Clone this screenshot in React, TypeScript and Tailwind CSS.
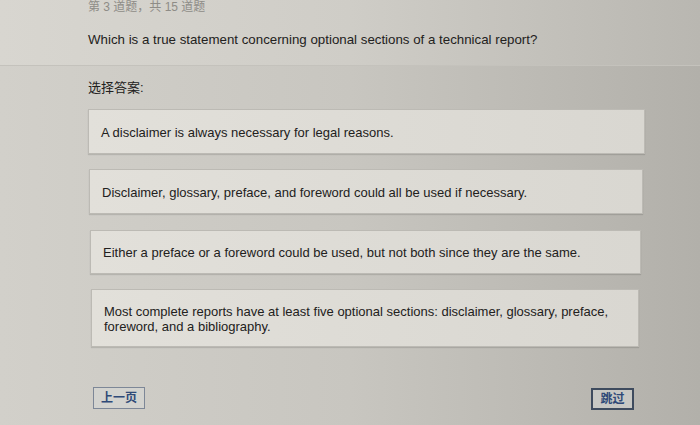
import React from 'react';

const options = [
  {
    id: 'a',
    text: 'A disclaimer is always necessary for legal reasons.',
    box: 'ml-[88px] w-[557px] h-[45px] mt-[12px]',
  },
  {
    id: 'b',
    text: 'Disclaimer, glossary, preface, and foreword could all be used if necessary.',
    box: 'ml-[89px] w-[554px] h-[45px] mt-[15px]',
  },
  {
    id: 'c',
    text: 'Either a preface or a foreword could be used, but not both since they are the same.',
    box: 'ml-[90px] w-[551px] h-[44px] mt-[16px]',
  },
  {
    id: 'd',
    text: 'Most complete reports have at least five optional sections: disclaimer, glossary, preface, foreword, and a bibliography.',
    box: 'ml-[91px] w-[548px] h-[58px] mt-[15px]',
  },
];

export default function App() {
  return (
    <div
      className="w-[700px] h-[425px] overflow-hidden flex flex-col bg-linear-to-r from-[#d2d0ca] via-[#c8c6c0] to-[#b2b0aa] text-[#2b2a28]"
      style={{ fontFamily: '"Liberation Sans", Arial, "Noto Sans CJK SC", sans-serif' }}
    >
      {/* Header */}
      <div className="h-[66px] shrink-0 border-b border-[#c4c2bc] bg-linear-to-r from-[#d8d6d0] via-[#cfcdc7] to-[#b9b7b1] pl-[88px]">
        <div className="pt-px text-[12px] leading-[12px] text-[#8e8c87]">第 3 道题，共 15 道题</div>
        <div className="mt-[18px] text-[13.3px] leading-[18px] text-[#222120]">
          Which is a true statement concerning optional sections of a technical report?
        </div>
      </div>

      {/* Body */}
      <div className="flex-1 flex flex-col">
        <div className="ml-[88px] mt-[13px] text-[13px] leading-[18px] text-[#222120]">选择答案:</div>

        {options.map((o) => (
          <div
            key={o.id}
            className={`${o.box} flex items-center px-[12px] border border-[#bcbab4] shadow-[0_1px_1px_rgba(0,0,0,0.12)] bg-linear-to-r from-[#e2e0da] to-[#d9d7d1] text-[13px] leading-[15px] text-[#222120]`}
          >
            <span className="pt-px">{o.text}</span>
          </div>
        ))}

        <div className="mt-[40px] flex items-start">
          <button className="ml-[93px] w-[52px] h-[22px] border border-[#7d8797] bg-[#d3d3cf] text-[12px] font-bold text-[#2f4a78] leading-none">
            上一页
          </button>
          <button className="ml-auto mr-[66px] mt-px w-[43px] h-[22px] border-2 border-[#3e4b5e] bg-[#c8c8c4] text-[12px] font-bold text-[#2f4a78] leading-none">
            跳过
          </button>
        </div>
      </div>
    </div>
  );
}
